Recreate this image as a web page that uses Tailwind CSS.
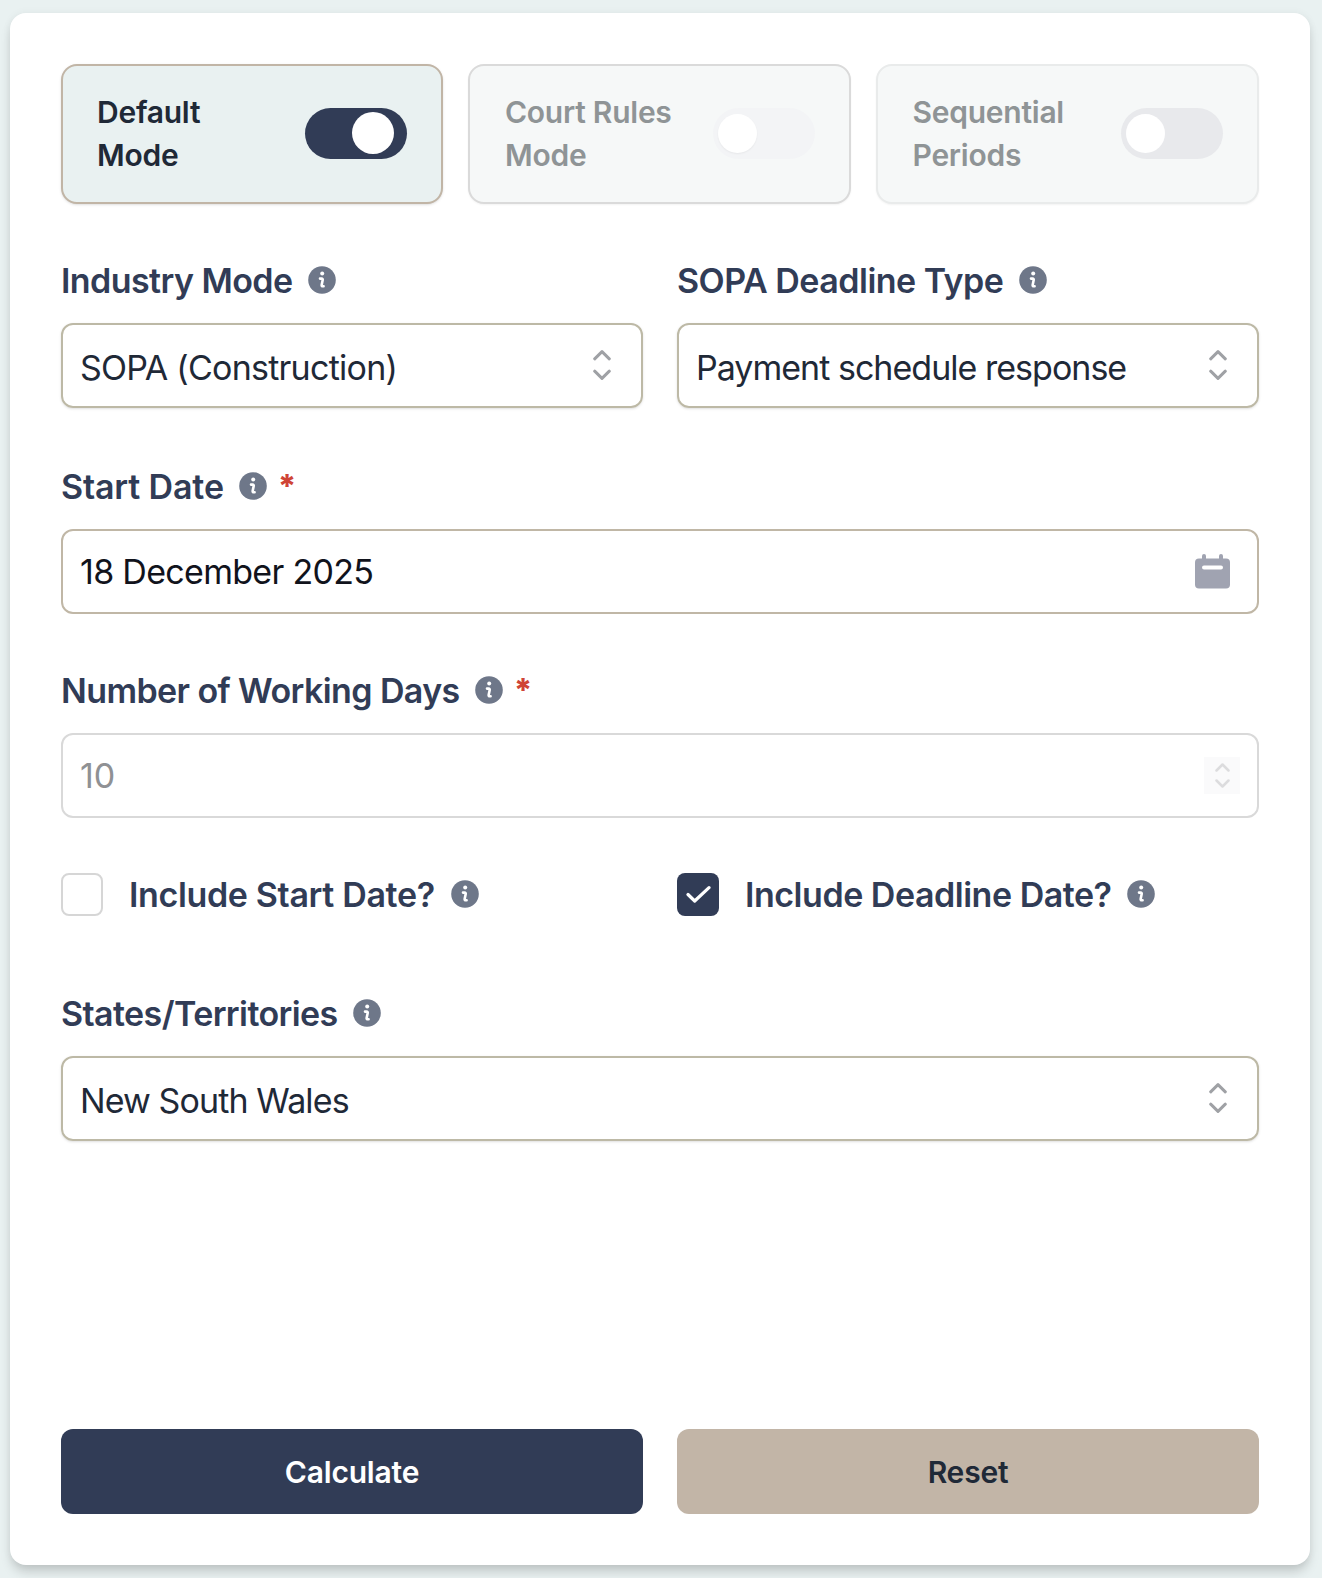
<!DOCTYPE html>
<html lang="en">
  <head>
    <meta charset="UTF-8" />
    <meta name="viewport" content="width=device-width, initial-scale=1.0" />
    <title>Deadline Calculator</title>
    <script src="https://cdn.jsdelivr.net/npm/@tailwindcss/browser@4"></script>
  </head>
  <body class="h-[1578px] bg-[#e9f1f1] pl-[10px] pt-[13px] font-['Inter',sans-serif]">
    <svg class="hidden">
      <symbol id="info" viewBox="0 0 28 28">
        <circle cx="14" cy="14" r="13.8" fill="#6e7789" />
        <circle cx="14.2" cy="7.6" r="2" fill="#fff" />
        <path d="M12 12.6h1.6c.9 0 1.3.6 1.1 1.4l-1 4.8c-.2.9.2 1.5 1.1 1.5h.8" fill="none" stroke="#fff" stroke-width="2.6" stroke-linecap="round" />
      </symbol>
      <symbol id="updown" viewBox="0 0 18 30">
        <path d="M1.7 8.8 9 1.7l7.3 7.1M1.7 21.2 9 28.3l7.3-7.1" fill="none" stroke="currentColor" stroke-width="3" stroke-linecap="round" stroke-linejoin="round" />
      </symbol>
    </svg>

    <main class="flex h-[1552px] w-[1300px] flex-col rounded-2xl bg-white px-[51px] pt-[51px] shadow-[0_8px_12px_-2px_rgba(0,0,0,0.18),0_0_8px_rgba(0,0,0,0.05)]">
      <!-- mode toggles -->
      <div class="grid h-[140px] grid-cols-[382px_382.5px_1fr] gap-[25px] text-[30px] font-[560] leading-[43px] tracking-[-0.25px]">
        <div class="flex items-center justify-between rounded-2xl border-2 border-[#c1b5a6] bg-[#e9f1f1] px-[34px] text-[#1f2937] shadow-sm">
          <div>Default<br />Mode</div>
          <button class="mb-[2px] flex h-[51px] w-[102px] items-center rounded-full bg-[#313c56] pl-[47px]"><span class="size-[42px] rounded-full bg-white"></span></button>
        </div>
        <div class="flex items-center justify-between rounded-2xl border-2 border-[#dadada] bg-[#f6f8f8] pl-[35px] pr-[34px] text-[#8f9496] shadow-xs">
          <div>Court Rules<br />Mode</div>
          <button class="mb-[2px] flex h-[51px] w-[102px] items-center rounded-full bg-[#f3f4f6] pl-[5px]"><span class="size-[39px] rounded-full bg-white shadow-xs"></span></button>
        </div>
        <div class="flex items-center justify-between rounded-2xl border-2 border-[#e9ebeb] bg-[#f6f8f8] pl-[35px] pr-[34px] text-[#8f9496] shadow-xs">
          <div>Sequential<br />Periods</div>
          <button class="mb-[2px] flex h-[51px] w-[102px] items-center rounded-full bg-[#e8e9ec] pl-[5px]"><span class="size-[39px] rounded-full bg-white"></span></button>
        </div>
      </div>

      <div class="mt-[55px] grid grid-cols-2 gap-[34px]">
        <div>
          <label class="flex h-[44px] items-center gap-[15px] text-[34px] font-semibold leading-[44px] text-[#313c56]"><span class="tracking-[-0.57px]">Industry Mode</span><svg class="mb-[2px] size-7"><use href="#info" /></svg></label>
          <button class="mt-[20px] flex h-[85px] w-full items-center justify-between rounded-xl border-2 border-[#bdb9a6] pl-[17px] pr-[30px] text-[34px] text-[#1f2937] shadow-sm"><span class="pt-[3px] tracking-[-0.75px]">SOPA (Construction)</span><svg class="mb-px h-[30px] w-[18px] text-[#9fa1a5]"><use href="#updown" /></svg></button>
        </div>
        <div>
          <label class="flex h-[44px] items-center gap-4 text-[34px] font-semibold leading-[44px] text-[#313c56]"><span class="tracking-[-0.5px]">SOPA Deadline Type</span><svg class="mb-[2px] size-7"><use href="#info" /></svg></label>
          <button class="mt-[20px] flex h-[85px] w-full items-center justify-between rounded-xl border-2 border-[#bdb9a6] pl-[17px] pr-[30px] text-[34px] text-[#1f2937] shadow-sm"><span class="pt-[3px] tracking-[-0.98px]">Payment schedule response</span><svg class="mb-px h-[30px] w-[18px] text-[#9fa1a5]"><use href="#updown" /></svg></button>
        </div>
      </div>

      <div class="mt-[57px]">
        <label class="flex h-[44px] items-center text-[34px] font-semibold leading-[44px] text-[#313c56]"><span class="mr-[15px] tracking-[-0.15px]">Start Date</span><svg class="mb-[2px] size-7"><use href="#info" /></svg><span class="ml-[11px] text-[32px] font-extrabold text-[#cf4436]">*</span></label>
        <div class="mt-[20px] flex h-[85px] items-center justify-between rounded-xl border-2 border-[#c0b7a6] pl-[17px] pr-[27px] text-[34px] text-[#11131c]">
          <span class="tracking-[-0.7px]">18 December 2025</span>
          <svg class="mb-[1px] h-[35px] w-[35px]" viewBox="0 0 35 35"><path d="M9 2v6M26 2v6" stroke="#a0a3b1" stroke-width="4" stroke-linecap="round" /><rect y="4.5" width="35" height="30" rx="4" fill="#a0a3b1" /><path d="M9 13.5h17" stroke="#fff" stroke-width="4" stroke-linecap="round" /></svg>
        </div>
      </div>

      <div class="mt-[55px]">
        <label class="flex h-[44px] items-center text-[34px] font-semibold leading-[44px] text-[#313c56]"><span class="mr-[15px] tracking-[-0.6px]">Number of Working Days</span><svg class="mb-[2px] size-7"><use href="#info" /></svg><span class="ml-[11px] text-[32px] font-extrabold text-[#cf4436]">*</span></label>
        <div class="mt-[20px] flex h-[85px] items-center justify-between rounded-xl border-2 border-[#d9d9d9] pl-[17px] pr-[17px] text-[34px] text-[#8f9194]">
          <span>10</span>
          <span class="flex h-[37px] w-[36px] items-center justify-center bg-[#fafafb]"><svg class="h-[25px] w-[15px] text-[#dcdcde]" viewBox="0 0 15 25"><path d="M1.5 7.500 7.500 1.500l6 6M1.500 17.500l6 6 6-6" fill="none" stroke="currentColor" stroke-width="2.500" stroke-linecap="round" stroke-linejoin="round" /></svg></span>
        </div>
      </div>

      <div class="mt-[55px] grid grid-cols-2 gap-[34px]">
        <label class="flex h-[43px] items-center text-[34px] font-semibold text-[#313c56]"><span class="mr-[26px] h-[43px] w-[42px] rounded-lg border-2 border-[#d6d6d6]"></span><span class="mr-4 tracking-[-0.35px]">Include Start Date?</span><svg class="mb-[2px] size-7"><use href="#info" /></svg></label>
        <label class="flex h-[43px] items-center text-[34px] font-semibold text-[#313c56]"><span class="mr-[26px] flex h-[43px] w-[42px] items-center justify-center rounded-lg bg-[#313c56]"><svg class="mb-px h-[17px] w-[25px]" viewBox="0 0 25 17"><path d="M2 8.500 8.700 15 23 1.700" fill="none" stroke="#fff" stroke-width="3.200" stroke-linecap="round" stroke-linejoin="round" /></svg></span><span class="mr-[15px] tracking-[-0.47px]">Include Deadline Date?</span><svg class="mb-[2px] size-7"><use href="#info" /></svg></label>
      </div>

      <div class="mt-[76px]">
        <label class="flex h-[44px] items-center gap-[15px] text-[34px] font-semibold leading-[44px] text-[#313c56]"><span class="tracking-[-0.6px]">States/Territories</span><svg class="mb-[2px] size-7"><use href="#info" /></svg></label>
        <button class="mt-[20px] flex h-[85px] w-full items-center justify-between rounded-xl border-2 border-[#bdb9a6] pl-[17px] pr-[30px] text-[34px] text-[#1f2937] shadow-sm"><span class="pt-[3px] tracking-[-0.9px]">New South Wales</span><svg class="mb-px h-[30px] w-[18px] text-[#9fa1a5]"><use href="#updown" /></svg></button>
      </div>

      <div class="mb-[51px] mt-auto grid grid-cols-2 gap-[34px] text-[30px] font-[560] tracking-[-0.2px]">
        <button class="h-[85px] rounded-xl bg-[#313c56] pt-[2px] text-white">Calculate</button>
        <button class="h-[85px] rounded-xl bg-[#c2b5a7] pt-[2px] text-[#1f2937]">Reset</button>
      </div>
    </main>
  </body>
</html>
